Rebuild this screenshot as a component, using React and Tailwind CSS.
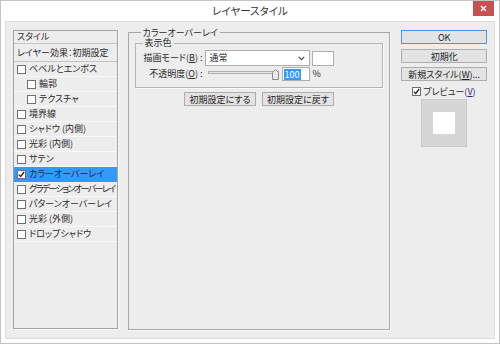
const font = {
  fontFamily: '"Noto Sans CJK JP", "Noto Sans", sans-serif',
  fontFeatureSettings: '"palt"',
}

function Box({ checked }) {
  return (
    <span className="flex h-[9px] w-[9px] shrink-0 items-center justify-center border border-[#707070] bg-white">
      {checked && (
        <svg width="7" height="7" viewBox="0 0 7 7">
          <path d="M0.8 3.6 L2.7 5.5 L6.2 1" fill="none" stroke="#222" strokeWidth="1.3" />
        </svg>
      )}
    </span>
  )
}

function Key({ k }) {
  return (
    <>
      (<span className="underline">{k}</span>)
    </>
  )
}

function Btn({ children, primary, className = '' }) {
  return (
    <div
      className={`flex h-[14px] items-center justify-center border bg-[#e3e3e3] text-[9px] leading-none text-[#222] ${
        primary ? 'border-[#4d94dc]' : 'border-[#adadad]'
      } ${className}`}
    >
      {children}
    </div>
  )
}

const effects = [
  { label: 'ベベルとエンボス' },
  { label: '輪郭', sub: true },
  { label: 'テクスチャ', sub: true },
  { label: '境界線' },
  { label: 'シャドウ (内側)' },
  { label: '光彩 (内側)' },
  { label: 'サテン' },
  { label: 'カラーオーバーレイ', checked: true, active: true },
  { label: 'グラデーションオーバーレイ', tight: true },
  { label: 'パターンオーバーレイ' },
  { label: '光彩 (外側)' },
  { label: 'ドロップシャドウ' },
]

export default function App() {
  return (
    <div
      style={font}
      className="flex h-[344px] w-[500px] flex-col border border-[#c4c4c4] bg-white text-[9px] text-[#2a2a2a]"
    >
      <div className="grid h-[20px] grid-cols-[1fr_auto_1fr] items-start">
        <div />
        <div className="pt-[3px] text-[10.5px] leading-[14px] text-[#333]">レイヤースタイル</div>
        <div className="flex justify-end pr-[5px]">
          <div className="flex h-[15px] w-[21px] items-center justify-center bg-[#c75050]">
            <svg width="7" height="7" viewBox="0 0 7 7">
              <path d="M1 1 L6 6 M6 1 L1 6" stroke="#fff" strokeWidth="1.4" />
            </svg>
          </div>
        </div>
      </div>

      <div className="mx-[4px] mb-[4px] flex flex-1 border border-[#dcdcdc] bg-[#ededed] px-[7px] pt-[6px]">
        {/* effects list */}
        <div className="mt-[2px] flex h-[299px] w-[105px] flex-col border border-[#a3a3a3] shadow-[1px_1px_0_#fafafa]">
          <div className="flex h-[13px] items-center border-b border-[#c4c4c4] pl-[3px]">スタイル</div>
          <div className="flex h-[18px] items-center border-b border-[#c4c4c4] pl-[3px]">
            レイヤー効果：初期設定
          </div>
          {effects.map((e) => (
            <div
              key={e.label}
              className={`flex h-[15px] items-center gap-[3px] border-b ${
                e.active ? 'border-[#3399ff] bg-[#3399ff]' : 'border-[#f9f9f9]'
              } ${e.sub ? 'pl-[13px]' : 'pl-[3px]'}`}
            >
              <Box checked={e.checked} />
              <span className={`whitespace-nowrap ${e.tight ? 'tracking-[-1.6px]' : ''}`}>{e.label}</span>
            </div>
          ))}
        </div>

        {/* settings */}
        <fieldset className="ml-[10px] h-[302px] w-[264px] border border-[#a8a8a8] px-[6px] shadow-[1px_1px_0_#fafafa]">
          <legend className="ml-[6px] px-[2px] leading-[9px]">カラーオーバーレイ</legend>
          <fieldset className="mt-[1px] border border-[#b4b4b4] pb-[6px] shadow-[1px_1px_0_#fafafa]">
            <legend className="ml-[7px] px-[2px] leading-[10px]">表示色</legend>
            <div className="mt-[2px] flex h-[16px] items-center">
              <span className="w-[69px] pr-[2px] text-right whitespace-nowrap">
                描画モード<Key k="B" /> :
              </span>
              <div className="flex h-[16px] w-[105px] items-center justify-between border border-[#adadad] bg-white pl-[4px] pr-[4px]">
                <span>通常</span>
                <svg width="7" height="5" viewBox="0 0 7 5">
                  <path d="M0.8 0.8 L3.5 3.6 L6.2 0.8" fill="none" stroke="#444" strokeWidth="1.2" />
                </svg>
              </div>
              <div className="ml-[2px] h-[15px] w-[22px] border border-[#adadad] bg-white" />
            </div>
            <div className="mt-[1px] flex h-[14px] items-center">
              <span className="w-[69px] pr-[2px] text-right whitespace-nowrap">
                不透明度<Key k="O" /> :
              </span>
              <svg className="ml-[3px]" width="72" height="14" viewBox="0 0 72 14">
                <rect x="0.5" y="4.5" width="70" height="2" fill="#e6e6e6" stroke="#b0b0b0" strokeWidth="1" />
                <path d="M64.5 12.5 L64.5 5.5 L67.5 2.5 L70.5 5.5 L70.5 12.5 Z" fill="#e8e8e8" stroke="#8a8a8a" />
              </svg>
              <div className="ml-[2px] flex h-[14px] w-[28px] items-center border border-[#adadad] bg-white pl-[1px]">
                <span className="bg-[#3399ff] px-[1px] leading-[11px] text-white">100</span>
              </div>
              <span className="ml-[3px]">%</span>
            </div>
          </fieldset>
          <div className="mt-[4px] flex justify-center gap-[6px]">
            <Btn className="w-[72px]">初期設定にする</Btn>
            <Btn className="w-[72px]">初期設定に戻す</Btn>
          </div>
        </fieldset>

        {/* buttons */}
        <div className="ml-[11px] mt-[2px] flex w-[86px] flex-col">
          <Btn primary>OK</Btn>
          <Btn className="mt-[5px]">初期化</Btn>
          <Btn className="mt-[4px]">
            新規スタイル<Key k="W" />...
          </Btn>
          <div className="ml-[11px] mt-[5px] flex h-[11px] items-center gap-[2px]">
            <Box checked />
            <span>
              プレビュー<span className="text-[#2b2b7a]"><Key k="V" /></span>
            </span>
          </div>
          <div className="ml-[20px] mt-[2px] flex h-[48px] w-[46px] items-center justify-center border border-[#c9c9c9] bg-[#d6d6d6]">
            <div className="h-[22px] w-[22px] bg-white" />
          </div>
        </div>
      </div>
    </div>
  )
}
